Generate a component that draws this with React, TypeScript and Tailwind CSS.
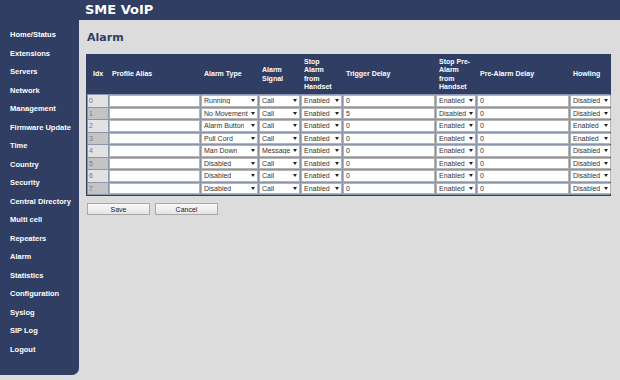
import React from "react";

const nav = [
  "Home/Status",
  "Extensions",
  "Servers",
  "Network",
  "Management",
  "Firmware Update",
  "Time",
  "Country",
  "Security",
  "Central Directory",
  "Multi cell",
  "Repeaters",
  "Alarm",
  "Statistics",
  "Configuration",
  "Syslog",
  "SIP Log",
  "Logout",
];

type Row = [string, string, string, string, string, string, string];
const rows: Row[] = [
  ["Running", "Call", "Enabled", "0", "Enabled", "0", "Disabled"],
  ["No Movement", "Call", "Enabled", "5", "Disabled", "0", "Disabled"],
  ["Alarm Button", "Call", "Enabled", "0", "Enabled", "0", "Enabled"],
  ["Pull Cord", "Call", "Enabled", "0", "Enabled", "0", "Enabled"],
  ["Man Down", "Message", "Enabled", "0", "Enabled", "0", "Disabled"],
  ["Disabled", "Call", "Enabled", "0", "Enabled", "0", "Disabled"],
  ["Disabled", "Call", "Enabled", "0", "Enabled", "0", "Disabled"],
  ["Disabled", "Call", "Enabled", "0", "Enabled", "0", "Disabled"],
];

const cols = "grid-cols-[20px_91px_57px_41px_41px_92px_40px_92px_41px]";

function Sel({ v }: { v: string }) {
  return (
    <div className="h-[11.5px] bg-white border border-[#b4b4b4] flex items-center justify-between pl-[2px] pr-[2px] text-[7px] leading-none text-[#333]">
      <span className="whitespace-nowrap overflow-hidden">{v}</span>
      <svg width="4" height="3" viewBox="0 0 4 3" className="shrink-0">
        <path d="M0 0 L4 0 L2 3 Z" fill="#222" />
      </svg>
    </div>
  );
}

function Inp({ v }: { v: string }) {
  return (
    <div className="h-[11.5px] bg-white border border-[#b4b4b4] flex items-center pl-[2px] text-[7px] leading-none text-[#333]">
      {v}
    </div>
  );
}

export default function App() {
  return (
    <div
      className="w-[620px] h-[380px] bg-[#dcdcdc] flex overflow-hidden"
      style={{ fontFamily: '"Liberation Sans", Arial, sans-serif' }}
    >
      <div className="w-[79px] h-[375px] bg-[#2f3e62] rounded-br-[7px] pt-[25.5px] pl-[10px] shrink-0">
        {nav.map((n) => (
          <div
            key={n}
            className="h-[18.5px] flex items-center text-white font-bold text-[7.5px] whitespace-nowrap"
          >
            {n}
          </div>
        ))}
      </div>
      <div className="flex-1 flex flex-col">
        <div
          className="h-[20px] bg-[#2f3e62] flex items-center pl-[6px] text-white font-bold text-[13px]"
          style={{ fontFamily: '"DejaVu Sans", Verdana, sans-serif' }}
        >
          SME VoIP
        </div>
        <div className="pl-[7px] pt-[3px]">
          <div
            className="pl-[1px] text-[#2f3e62] font-bold text-[11px] h-[31px] flex items-center"
            style={{ fontFamily: '"DejaVu Sans", Verdana, sans-serif' }}
          >
            Alarm
          </div>
          <div className="w-[525px] border border-[#2f3e62] bg-[#2f3e62]">
            <div className={`grid ${cols} gap-x-px px-px h-[39px] text-white font-bold text-[7px] leading-[8.5px]`}>
              <div className="flex items-center justify-center">Idx</div>
              <div className="flex items-center pl-[3px]">Profile Alias</div>
              <div className="flex items-center pl-[3px]">Alarm Type</div>
              <div className="flex items-center pl-[3px]">
                Alarm
                <br />
                Signal
              </div>
              <div className="flex items-center pl-[3px]">
                Stop
                <br />
                Alarm
                <br />
                from
                <br />
                Handset
              </div>
              <div className="flex items-center pl-[3px]">Trigger Delay</div>
              <div className="flex items-center pl-[3px]">
                Stop Pre-
                <br />
                Alarm
                <br />
                from
                <br />
                Handset
              </div>
              <div className="flex items-center pl-[3px]">Pre-Alarm Delay</div>
              <div className="flex items-center pl-[3px]">Howling</div>
            </div>
            <div className={`grid ${cols} gap-px p-px bg-[#8a95ad]`}>
              {rows.map((r, i) => (
                <React.Fragment key={i}>
                  <div
                    className={`h-[11.5px] flex items-center pl-[1px] text-[7px] leading-none text-[#777] ${
                      i % 2 === 0 ? "bg-[#e2e2e2]" : "bg-[#c4c4c4]"
                    }`}
                  >
                    {i}
                  </div>
                  <Inp v="" />
                  <Sel v={r[0]} />
                  <Sel v={r[1]} />
                  <Sel v={r[2]} />
                  <Inp v={r[3]} />
                  <Sel v={r[4]} />
                  <Inp v={r[5]} />
                  <Sel v={r[6]} />
                </React.Fragment>
              ))}
            </div>
          </div>
          <div className="flex gap-[5px] mt-[7px] pl-[1px]">
            <button className="w-[63px] h-[12px] border border-[#a8a8a8] bg-gradient-to-b from-[#fafafa] to-[#e4e4e4] text-[7px] leading-none text-[#222]">
              Save
            </button>
            <button className="w-[63px] h-[12px] border border-[#a8a8a8] bg-gradient-to-b from-[#fafafa] to-[#e4e4e4] text-[7px] leading-none text-[#222]">
              Cancel
            </button>
          </div>
        </div>
      </div>
    </div>
  );
}
